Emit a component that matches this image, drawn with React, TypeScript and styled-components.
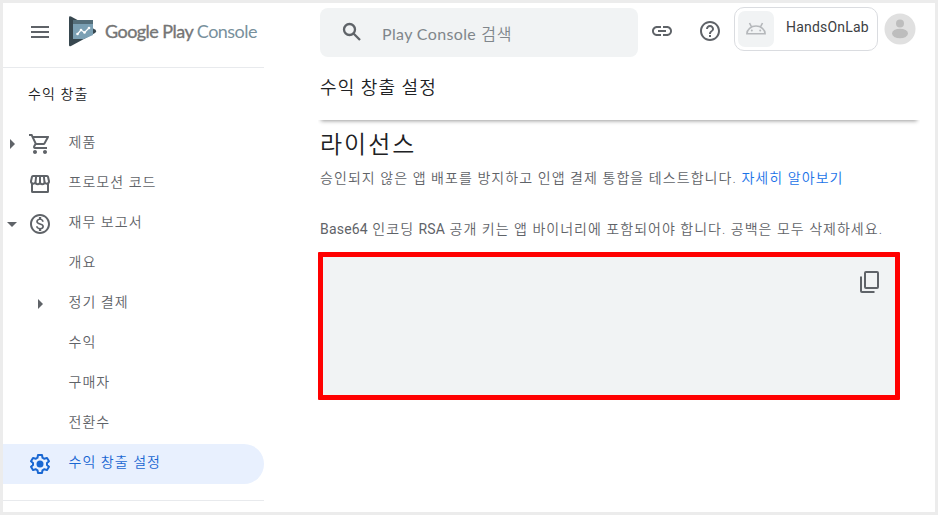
import React from "react";
import styled, { createGlobalStyle } from "styled-components";
import {
  MdMenu,
  MdOutlineShoppingCart,
  MdOutlineMonetizationOn,
  MdLink,
  MdHelpOutline,
  MdArrowRight,
  MdArrowDropDown,
} from "react-icons/md";

const GlobalStyle = createGlobalStyle`
  * { box-sizing: border-box; }
  body {
    margin: 0;
    background: #ececec;
    font-family: Roboto, "Noto Sans CJK KR", sans-serif;
    color: #5f6368;
  }
  svg { display: block; flex: none; }
`;

const Frame = styled.div`
  width: 938px;
  height: 515px;
  border: 3px solid #ececec;
  background: #fff;
  display: flex;
  overflow: hidden;
`;

const Sidebar = styled.aside`
  width: 261px;
  flex: none;
  display: flex;
  flex-direction: column;
`;

const Brand = styled.header`
  height: 65px;
  flex: none;
  border-bottom: 1px solid #e8eaed;
  display: flex;
  align-items: flex-start;
  padding: 13px 0 0 25px;
`;

const MenuIcon = styled(MdMenu)`
  margin-top: 4px;
`;

const LogoMark = styled.svg`
  margin-left: 17px;
`;

const Wordmark = styled.div`
  margin-left: 8px;
  font: 400 18px/30px Lato, sans-serif;
  letter-spacing: -0.54px;
  white-space: nowrap;
  color: #757575;
  -webkit-text-stroke: 0.35px;
`;

const Product = styled.span`
  color: #78909c;
  -webkit-text-stroke: 0;
`;

const SectionTitle = styled.h2`
  margin: 0;
  height: 56px;
  padding: 0 0 0 25px;
  font-size: 14px;
  font-weight: 350;
  line-height: 53px;
  letter-spacing: 1.1px;
  color: #202124;
`;

const Nav = styled.nav`
  display: flex;
  flex-direction: column;
  height: 377px;
  border-bottom: 1px solid #e8eaed;
`;

const NavRow = styled.a<{ $active?: boolean; $nested?: boolean }>`
  height: 40px;
  flex: none;
  display: flex;
  align-items: center;
  border-radius: 0 20px 20px 0;
  color: ${(p) => (p.$active ? "#1967d2" : "#5f6368")};
  background: ${(p) => (p.$active ? "#e8f0fe" : "transparent")};
  padding-left: ${(p) => (p.$nested ? "25px" : "0")};
`;

const Slot = styled.span<{ $w: number }>`
  width: ${(p) => p.$w}px;
  height: 24px;
  flex: none;
`;

const Chevron = styled(Slot)`
  margin-left: -3px;
`;

const NavLabel = styled.span`
  font-size: 14px;
  line-height: 20px;
  letter-spacing: 1.05px;
  margin-top: -4px;
  padding-left: 0.5px;
  font-weight: 350;
  white-space: nowrap;
`;

const Main = styled.main`
  flex: 1;
  min-width: 0;
  padding-left: 54px;
  display: flex;
  flex-direction: column;
`;

const TopBar = styled.header`
  display: flex;
  align-items: flex-start;
  height: 54px;
  padding-left: 2px;
`;

const SearchBox = styled.div`
  margin-top: 5px;
  width: 318px;
  height: 49px;
  border-radius: 8px;
  background: #f1f3f4;
  display: flex;
  padding: 12px 0 0 20px;
`;

const Placeholder = styled.span`
  margin-left: 18px;
  font: 350 16px/28px Lato, "Noto Sans CJK KR", sans-serif;
  letter-spacing: 0.8px;
  color: #80868b;
  white-space: nowrap;
`;

const PlaceholderLatin = styled.span`
  font-weight: 400;
  letter-spacing: 0.36px;
`;

const LinkIcon = styled(MdLink)`
  margin: 16px 0 0 12px;
`;

const HelpIcon = styled(MdHelpOutline)`
  margin: 16px 0 0 24px;
`;

const Account = styled.div`
  margin: 4px 0 0 12px;
  width: 144px;
  height: 44px;
  border: 1px solid #dadce0;
  border-radius: 10px;
  display: flex;
  padding: 3px;
`;

const AppTile = styled.div`
  width: 36px;
  height: 36px;
  border-radius: 7px;
  background: #f1f3f4;
  display: flex;
  align-items: center;
  justify-content: center;
`;

const AccountName = styled.span`
  margin-left: 12px;
  font-size: 14px;
  line-height: 32px;
  letter-spacing: 0.2px;
  color: #3c4043;
`;

const Avatar = styled.svg`
  margin: 10px 0 0 6px;
`;

const PageHeader = styled.div`
  width: 602px;
  height: 63px;
  padding-left: 2px;
  background: #fff;
  clip-path: inset(0 0 -8px 0);
  box-shadow: 0 4px 4px -3px rgba(0, 0, 0, 0.4);
`;

const PageTitle = styled.h1`
  margin: 0;
  font-size: 18px;
  line-height: 61px;
  font-weight: 350;
  letter-spacing: 1.1px;
  color: #202124;
`;

const Section = styled.section`
  padding-left: 2px;
  display: flex;
  flex-direction: column;
`;

const Heading = styled.h2`
  margin: 7px 0 0;
  font-size: 24px;
  line-height: 36px;
  font-weight: 350;
  letter-spacing: 2px;
  color: #202124;
`;

const Text = styled.p<{ $gap: number; $ls: number }>`
  margin: ${(p) => p.$gap}px 0 0;
  font-size: 14px;
  line-height: 20px;
  font-weight: 350;
  letter-spacing: ${(p) => p.$ls}px;
  white-space: nowrap;
`;

const Latin = styled.span`
  font-weight: 400;
  letter-spacing: 0.2px;
`;

const HelpLink = styled.a`
  color: #1a73e8;
`;

const KeyBox = styled.div`
  width: 582px;
  height: 148px;
  margin: 13px 0 0 -2px;
  border: 5px solid #ff0000;
  border-radius: 1px;
  background: #f1f3f4;
  display: flex;
  justify-content: flex-end;
  padding: 13px 14px;
`;

const Search = () => (
  <svg width="24" height="24" viewBox="0 0 24 24" fill="none" stroke="currentColor" strokeWidth="2.300">
    <circle cx="9.500" cy="9.500" r="5.500" />
    <path d="M13.500 13.500 20 20" />
  </svg>
);

const Storefront = () => (
  <svg width="24" height="24" viewBox="0 0 24 24" fill="none" stroke="currentColor" strokeWidth="2">
    <path d="M4 11.500V19.500Q4 20 4.500 20H19.500Q20 20 20 19.500V11.500" />
    <path d="M5 4H19Q19.800 4 20 4.800L21 9.200A2.300 2.300 0 0 1 16.500 10A2.250 2.250 0 0 1 12 10A2.250 2.250 0 0 1 7.500 10A2.300 2.300 0 0 1 3 9.200L4 4.800Q4.200 4 5 4ZM8.200 4L7.500 10M12 4V10M15.800 4L16.500 10" />
  </svg>
);

const Gear = () => (
  <svg width="24" height="24" viewBox="0 0 24 24" fill="none" stroke="currentColor" strokeWidth="2" strokeLinejoin="round">
    <path d="M10 3h4l.5 2.700 1.900 1.100 2.600-.9 2 3.400-2 1.700v2l2 1.700-2 3.400-2.600-.9-1.900 1.100L14 21h-4l-.5-2.700-1.900-1.100-2.600.9-2-3.400 2-1.700v-2L3 9.300l2-3.400 2.600.9 1.900-1.100z" />
    <circle cx="12" cy="12" r="3.500" fill="currentColor" stroke="none" />
  </svg>
);

const Android = () => (
  <svg width="20" height="14" viewBox="0 0 20 14" fill="none" stroke="#b5b8bb" strokeWidth="1.600">
    <path d="M.9 11.800a9.100 7.800 0 0 1 18.200 0zM5.500 4.800 3.500 1M14.500 4.800 16.500 1" />
    <circle cx="5.800" cy="8.600" r="1" fill="#b5b8bb" stroke="none" />
    <circle cx="14.200" cy="8.600" r="1" fill="#b5b8bb" stroke="none" />
  </svg>
);

const Copy = () => (
  <svg width="24" height="24" viewBox="0 0 24 24" fill="none" stroke="#5f6368" strokeWidth="2">
    <rect x="8" y="2" width="13" height="16" rx="1" />
    <path d="M4 6.500V21a1 1 0 0 0 1 1h12.500" />
  </svg>
);

const Logo = () => (
  <LogoMark width="28" height="31" viewBox="0 0 28 31">
    <path d="M0 1.500Q0-.4 2 .5L26 13.500Q28.500 15.300 26 17L2 30Q0 31 0 29z" fill="#37474f" />
    <path d="M4 4h20v15L15 23H4z" fill="#7ba0b4" />
    <path d="M4 4h20v4H4z" fill="#546e7a" />
    <path d="M8.500 18 12 14l3.500 2.500L20 12" fill="none" stroke="#fff" strokeWidth="1.200" />
    <g fill="#fff">
      <circle cx="8.500" cy="18" r="1.300" />
      <circle cx="12" cy="14" r="1.300" />
      <circle cx="15.500" cy="16.500" r="1.300" />
      <circle cx="20" cy="12" r="1.300" />
    </g>
  </LogoMark>
);

type Item = {
  label: string;
  icon?: React.ReactNode;
  chevron?: "right" | "down";
  nested?: boolean;
  active?: boolean;
};

const items: Item[] = [
  { label: "제품", icon: <MdOutlineShoppingCart size={24} />, chevron: "right" },
  { label: "프로모션 코드", icon: <Storefront /> },
  { label: "재무 보고서", icon: <MdOutlineMonetizationOn size={24} />, chevron: "down" },
  { label: "개요", nested: true },
  { label: "정기 결제", nested: true, chevron: "right" },
  { label: "수익", nested: true },
  { label: "구매자", nested: true },
  { label: "전환수", nested: true },
  { label: "수익 창출 설정", icon: <Gear />, active: true },
];

const arrow = (c?: "right" | "down") =>
  c === "right" ? <MdArrowRight size={24} /> : c === "down" ? <MdArrowDropDown size={24} /> : null;

export default function App() {
  return (
    <>
      <GlobalStyle />
      <Frame>
        <Sidebar>
          <Brand>
            <MenuIcon size={24} />
            <Logo />
            <Wordmark>
              Google Play <Product>Console</Product>
            </Wordmark>
          </Brand>
          <SectionTitle>수익 창출</SectionTitle>
          <Nav>
            {items.map((it) => (
              <NavRow key={it.label} $active={it.active} $nested={it.nested}>
                {it.nested ? (
                  <Slot $w={40}>{arrow(it.chevron)}</Slot>
                ) : (
                  <>
                    <Chevron $w={28}>{arrow(it.chevron)}</Chevron>
                    <Slot $w={40}>{it.icon}</Slot>
                  </>
                )}
                <NavLabel>{it.label}</NavLabel>
              </NavRow>
            ))}
          </Nav>
        </Sidebar>
        <Main>
          <TopBar>
            <SearchBox>
              <Search />
              <Placeholder>
                <PlaceholderLatin>Play Console</PlaceholderLatin> 검색
              </Placeholder>
            </SearchBox>
            <LinkIcon size={24} />
            <HelpIcon size={24} />
            <Account>
              <AppTile>
                <Android />
              </AppTile>
              <AccountName>HandsOnLab</AccountName>
            </Account>
            <Avatar width="32" height="32" viewBox="0 0 32 32">
              <circle cx="16" cy="16" r="15.500" fill="#e0e0e0" />
              <circle cx="16" cy="10.500" r="4" fill="#bdbdbd" />
              <ellipse cx="16" cy="20.500" rx="8" ry="4.800" fill="#bdbdbd" />
            </Avatar>
          </TopBar>
          <PageHeader>
            <PageTitle>수익 창출 설정</PageTitle>
          </PageHeader>
          <Section>
            <Heading>라이선스</Heading>
            <Text $gap={5} $ls={1.07}>
              승인되지 않은 앱 배포를 방지하고 인앱 결제 통합을 테스트합니다. <HelpLink>자세히 알아보기</HelpLink>
            </Text>
            <Text $gap={31} $ls={1.02}>
              <Latin>Base64</Latin> 인코딩 <Latin>RSA</Latin> 공개 키는 앱 바이너리에 포함되어야 합니다. 공백은 모두
              삭제하세요.
            </Text>
            <KeyBox>
              <Copy />
            </KeyBox>
          </Section>
        </Main>
      </Frame>
    </>
  );
}
